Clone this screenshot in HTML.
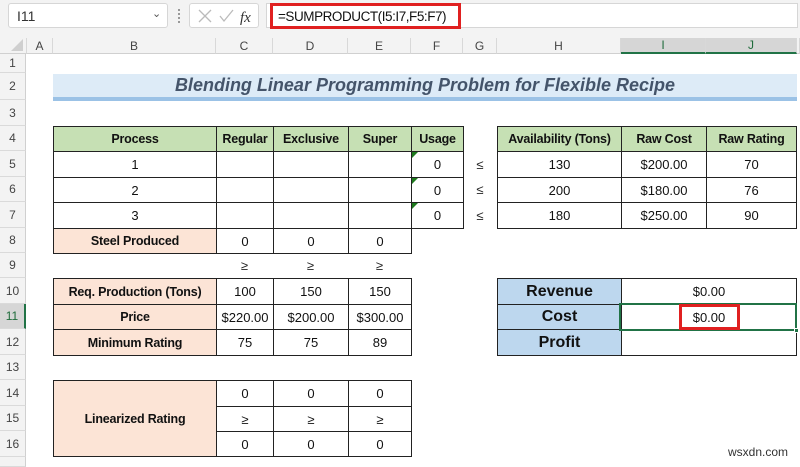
<!DOCTYPE html>
<html><head><meta charset="utf-8"><style>
body{margin:0;width:800px;height:462px;overflow:hidden;background:#fff;font-family:"Liberation Sans",sans-serif;position:relative}
div{position:absolute;box-sizing:border-box}
.c{display:flex;align-items:center;justify-content:center;border:1px solid #222;font-size:13px;color:#111;background:#fff;white-space:nowrap}
.b{font-weight:bold;font-size:12.5px;letter-spacing:-0.2px}
.g{background:#c6e0b4}.p{background:#fce4d6}.bl{background:#bdd7ee;font-size:16px;font-weight:bold}
.t{display:flex;align-items:center;justify-content:center;font-size:13px;color:#222}
.ch{top:38px;height:16px;display:flex;align-items:center;justify-content:center;font-size:12px;color:#444;border-right:1px solid #d8d8d8;background:#f3f3f3;border-bottom:1px solid #d0d0d0}
.rh{left:0;width:26px;display:flex;align-items:center;justify-content:center;font-size:12px;color:#444;background:#f3f3f3;border-bottom:1px solid #dadada;border-right:1px solid #d0d0d0}
.tri{width:0;height:0;border-top:6px solid #1e7a1e;border-right:6px solid transparent}
</style></head><body>
<div style="left:0;top:0;width:800px;height:38px;background:#f3f3f3"></div>
<div style="left:8px;top:3px;width:160px;height:25px;background:#fff;border:1px solid #d6d6d6;border-radius:3px;font-size:14px;color:#333;padding:4px 0 0 8px">I11<span style="position:absolute;left:143px;top:3px;font-size:11px;color:#555">&#8964;</span></div>
<div style="left:178px;top:9px;width:2px;height:14px;border-left:2px dotted #999"></div>
<div style="left:189px;top:3px;width:70px;height:25px;background:#fff;border:1px solid #d6d6d6;border-radius:3px">
<svg width="70" height="25" style="position:absolute;left:0;top:0"><path d="M9 6l12 12M21 6L9 18" stroke="#bbb" stroke-width="1.3" fill="none"/><path d="M30 12l4 5 9-11" stroke="#bbb" stroke-width="1.3" fill="none"/><text x="50" y="18" font-family="Liberation Serif" font-style="italic" font-size="15" fill="#333">fx</text></svg></div>
<div style="left:266px;top:3px;width:532px;height:25px;background:#fff;border:1px solid #d6d6d6"></div>
<div style="left:270px;top:3px;width:191px;height:26px;border:3px solid #e02020;font-size:13.5px;letter-spacing:-0.45px;color:#111;padding:3px 0 0 5px;white-space:nowrap">=SUMPRODUCT(I5:I7,F5:F7)</div>
<div class="ch" style="left:0;width:27px"><svg width="12" height="12" style="position:absolute;right:3px;bottom:2px"><path d="M12 0V12H0Z" fill="#cfcfcf"/></svg></div>
<div class="ch" style="left:27px;width:26px">A</div>
<div class="ch" style="left:53px;width:163px">B</div>
<div class="ch" style="left:216px;width:57px">C</div>
<div class="ch" style="left:273px;width:75px">D</div>
<div class="ch" style="left:348px;width:63px">E</div>
<div class="ch" style="left:411px;width:52px">F</div>
<div class="ch" style="left:463px;width:34px">G</div>
<div class="ch" style="left:497px;width:124px">H</div>
<div class="ch" style="left:621px;width:85px;background:#d6d6d6;color:#1e6b3a;border-bottom:2px solid #217346">I</div>
<div class="ch" style="left:706px;width:91px;background:#d6d6d6;color:#1e6b3a;border-bottom:2px solid #217346">J</div>
<div class="ch" style="left:797px;width:3px"></div>
<div class="rh" style="top:54px;height:19px">1</div>
<div class="rh" style="top:73px;height:27px">2</div>
<div class="rh" style="top:100px;height:26px">3</div>
<div class="rh" style="top:126px;height:25px">4</div>
<div class="rh" style="top:151px;height:26px">5</div>
<div class="rh" style="top:177px;height:25px">6</div>
<div class="rh" style="top:202px;height:26px">7</div>
<div class="rh" style="top:228px;height:25px">8</div>
<div class="rh" style="top:253px;height:25px">9</div>
<div class="rh" style="top:278px;height:26px">10</div>
<div class="rh" style="top:304px;height:25px;background:#d6d6d6;color:#1e6b3a;border-right:2px solid #217346">11</div>
<div class="rh" style="top:329px;height:26px">12</div>
<div class="rh" style="top:355px;height:25px">13</div>
<div class="rh" style="top:380px;height:26px">14</div>
<div class="rh" style="top:406px;height:25px">15</div>
<div class="rh" style="top:431px;height:26px">16</div>
<div class="rh" style="top:457px;height:10px"></div>
<div style="left:53px;top:74px;width:744px;height:27px;background:#ddebf7;border-bottom:4px solid #9bc2e6;display:flex;align-items:center;justify-content:center;font-weight:bold;font-style:italic;font-size:18px;color:#44546a">Blending Linear Programming Problem for Flexible Recipe</div>
<div class="c b g" style="left:53px;top:126px;width:164px;height:26px">Process</div>
<div class="c b g" style="left:216px;top:126px;width:58px;height:26px">Regular</div>
<div class="c b g" style="left:273px;top:126px;width:76px;height:26px">Exclusive</div>
<div class="c b g" style="left:348px;top:126px;width:64px;height:26px">Super</div>
<div class="c b g" style="left:411px;top:126px;width:53px;height:26px">Usage</div>
<div class="c" style="left:53px;top:151px;width:164px;height:27px">1</div>
<div class="c" style="left:216px;top:151px;width:58px;height:27px"></div>
<div class="c" style="left:273px;top:151px;width:76px;height:27px"></div>
<div class="c" style="left:348px;top:151px;width:64px;height:27px"></div>
<div class="c" style="left:411px;top:151px;width:53px;height:27px">0</div>
<div class="c" style="left:53px;top:177px;width:164px;height:26px">2</div>
<div class="c" style="left:216px;top:177px;width:58px;height:26px"></div>
<div class="c" style="left:273px;top:177px;width:76px;height:26px"></div>
<div class="c" style="left:348px;top:177px;width:64px;height:26px"></div>
<div class="c" style="left:411px;top:177px;width:53px;height:26px">0</div>
<div class="c" style="left:53px;top:202px;width:164px;height:27px">3</div>
<div class="c" style="left:216px;top:202px;width:58px;height:27px"></div>
<div class="c" style="left:273px;top:202px;width:76px;height:27px"></div>
<div class="c" style="left:348px;top:202px;width:64px;height:27px"></div>
<div class="c" style="left:411px;top:202px;width:53px;height:27px">0</div>
<div class="tri" style="left:412px;top:152px"></div>
<div class="tri" style="left:412px;top:178px"></div>
<div class="tri" style="left:412px;top:203px"></div>
<div class="c b p" style="left:53px;top:228px;width:164px;height:26px">Steel Produced</div>
<div class="c" style="left:216px;top:228px;width:58px;height:26px">0</div>
<div class="c" style="left:273px;top:228px;width:76px;height:26px">0</div>
<div class="c" style="left:348px;top:228px;width:64px;height:26px">0</div>
<div class="t" style="left:216px;top:253px;width:57px;height:25px">≥</div>
<div class="t" style="left:273px;top:253px;width:75px;height:25px">≥</div>
<div class="t" style="left:348px;top:253px;width:63px;height:25px">≥</div>
<div class="t" style="left:463px;top:151px;width:34px;height:26px">≤</div>
<div class="t" style="left:463px;top:177px;width:34px;height:25px">≤</div>
<div class="t" style="left:463px;top:202px;width:34px;height:26px">≤</div>
<div class="c b p" style="left:53px;top:278px;width:164px;height:27px">Req. Production (Tons)</div>
<div class="c" style="left:216px;top:278px;width:58px;height:27px">100</div>
<div class="c" style="left:273px;top:278px;width:76px;height:27px">150</div>
<div class="c" style="left:348px;top:278px;width:64px;height:27px">150</div>
<div class="c b p" style="left:53px;top:304px;width:164px;height:26px">Price</div>
<div class="c" style="left:216px;top:304px;width:58px;height:26px">$220.00</div>
<div class="c" style="left:273px;top:304px;width:76px;height:26px">$200.00</div>
<div class="c" style="left:348px;top:304px;width:64px;height:26px">$300.00</div>
<div class="c b p" style="left:53px;top:329px;width:164px;height:27px">Minimum Rating</div>
<div class="c" style="left:216px;top:329px;width:58px;height:27px">75</div>
<div class="c" style="left:273px;top:329px;width:76px;height:27px">75</div>
<div class="c" style="left:348px;top:329px;width:64px;height:27px">89</div>
<div class="c b p" style="left:53px;top:380px;width:164px;height:77px">Linearized Rating</div>
<div class="c" style="left:216px;top:380px;width:58px;height:27px">0</div>
<div class="c" style="left:273px;top:380px;width:76px;height:27px">0</div>
<div class="c" style="left:348px;top:380px;width:64px;height:27px">0</div>
<div class="c" style="left:216px;top:406px;width:58px;height:26px">≥</div>
<div class="c" style="left:273px;top:406px;width:76px;height:26px">≥</div>
<div class="c" style="left:348px;top:406px;width:64px;height:26px">≥</div>
<div class="c" style="left:216px;top:431px;width:58px;height:26px">0</div>
<div class="c" style="left:273px;top:431px;width:76px;height:26px">0</div>
<div class="c" style="left:348px;top:431px;width:64px;height:26px">0</div>
<div class="c b g" style="left:497px;top:126px;width:125px;height:26px">Availability (Tons)</div>
<div class="c b g" style="left:621px;top:126px;width:86px;height:26px">Raw Cost</div>
<div class="c b g" style="left:706px;top:126px;width:91px;height:26px">Raw Rating</div>
<div class="c" style="left:497px;top:151px;width:125px;height:27px">130</div>
<div class="c" style="left:621px;top:151px;width:86px;height:27px">$200.00</div>
<div class="c" style="left:706px;top:151px;width:91px;height:27px">70</div>
<div class="c" style="left:497px;top:177px;width:125px;height:26px">200</div>
<div class="c" style="left:621px;top:177px;width:86px;height:26px">$180.00</div>
<div class="c" style="left:706px;top:177px;width:91px;height:26px">76</div>
<div class="c" style="left:497px;top:202px;width:125px;height:27px">180</div>
<div class="c" style="left:621px;top:202px;width:86px;height:27px">$250.00</div>
<div class="c" style="left:706px;top:202px;width:91px;height:27px">90</div>
<div class="c bl" style="left:497px;top:278px;width:125px;height:27px">Revenue</div>
<div class="c" style="left:621px;top:278px;width:176px;height:27px">$0.00</div>
<div class="c bl" style="left:497px;top:304px;width:125px;height:26px">Cost</div>
<div class="c" style="left:621px;top:304px;width:176px;height:26px">$0.00</div>
<div class="c bl" style="left:497px;top:329px;width:125px;height:27px">Profit</div>
<div class="c" style="left:621px;top:329px;width:176px;height:27px"></div>
<div style="left:619px;top:303px;width:178px;height:28px;border:2px solid #217346"></div>
<div style="left:794px;top:328px;width:5px;height:5px;background:#217346;border:1px solid #fff"></div>
<div style="left:679px;top:304px;width:61px;height:26px;border:3px solid #e02020"></div>
<div style="left:728px;top:445px;font-size:12px;color:#333">wsxdn.com</div>
</body></html>
